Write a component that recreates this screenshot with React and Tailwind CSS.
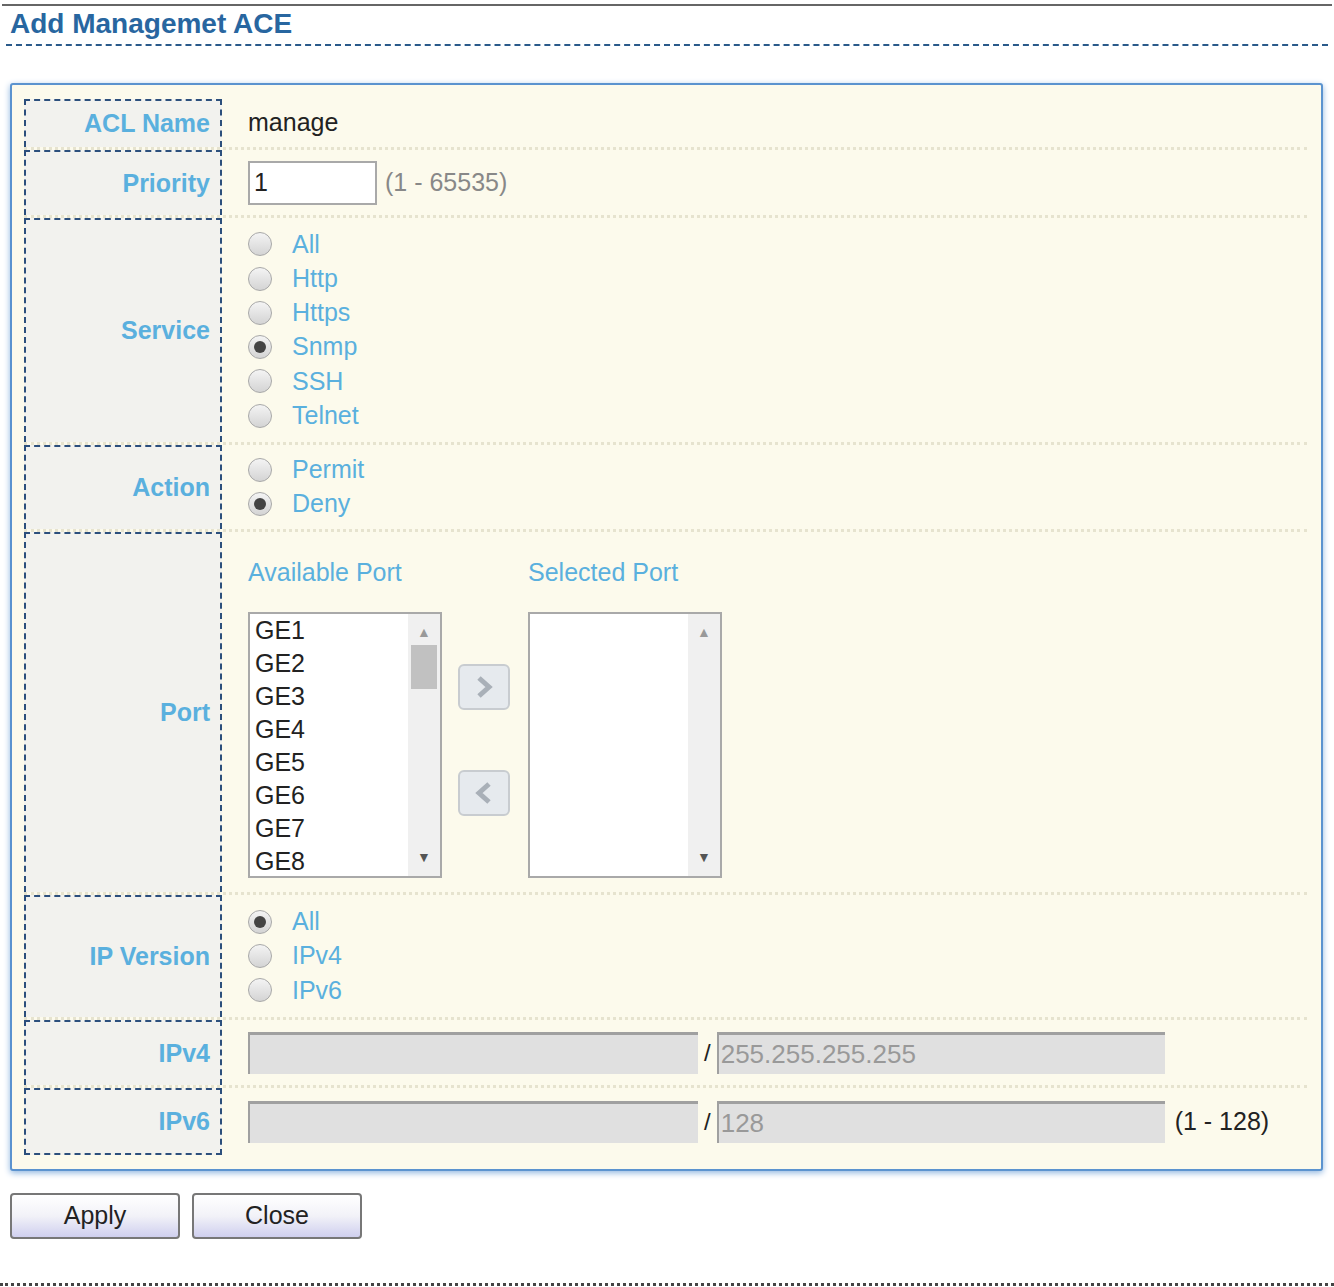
const font = { fontFamily: '"Liberation Sans", Arial, sans-serif' };

function Radio({ checked, label }) {
  return (
    <div className="flex items-center h-[34.3px] gap-[20px]">
      <span className="w-[24px] h-[24px] rounded-full border border-[#a8a8a8] bg-gradient-to-b from-[#f4f4f4] to-[#d4d4d4] flex items-center justify-center">
        {checked && <span className="w-[12px] h-[12px] rounded-full bg-[#444]" />}
      </span>
      <span className="text-[25px] text-[#5ab0de]">{label}</span>
    </div>
  );
}

function Row({ label, h, children, last }) {
  return (
    <div className={`flex ${last ? '' : 'border-b-[3px] border-dotted border-[#e6e3cf]'}`} style={{ height: h }}>
      <div className={`w-[198px] shrink-0 bg-[#f2f2ee] border-x-2 border-t-2 border-dashed border-[#2c4f7c] ${last ? 'border-b-2' : ''} flex items-center justify-end pr-[10px]`}>
        <span className="text-[25px] font-bold text-[#5ab0de]">{label}</span>
      </div>
      <div className="flex-1 pl-[26px] flex flex-col justify-center">{children}</div>
    </div>
  );
}

function ListBox({ items }) {
  return (
    <div className="w-[194px] h-[266px] border-2 border-[#a9a9a9] bg-white flex">
      <div className="flex-1 pl-[5px] text-[25px] text-[#222] leading-[33px] overflow-hidden">
        {items.map((i) => <div key={i}>{i}</div>)}
      </div>
      <div className="w-[32px] bg-[#f0f0f0] flex flex-col items-center py-[8px]">
        <span className="text-[14px] text-[#999]">▲</span>
        {items.length > 0 && <div className="w-[26px] h-[44px] bg-[#c1c1c1] mt-[2px]" />}
        <span className="text-[14px] text-[#555] mt-auto">▼</span>
      </div>
    </div>
  );
}

function Arrow({ dir }) {
  return (
    <div className="w-[52px] h-[46px] rounded-[6px] border-2 border-[#c8ccd0] bg-[#e6eaee] flex items-center justify-center">
      <svg width="22" height="26" viewBox="0 0 22 26">
        <path d={dir === 'r' ? 'M6 4 L16 13 L6 22' : 'M16 4 L6 13 L16 22'} stroke="#a9b0b8" strokeWidth="5" fill="none" />
      </svg>
    </div>
  );
}

function GrayInput({ w, text }) {
  return (
    <div className={`${w} h-[42px] bg-[#e0e0e0] border-t-[3px] border-l-2 border-[#a0a0a0] flex items-center px-[2px] text-[26px] text-[#999]`}>
      {text}
    </div>
  );
}

export default function App() {
  return (
    <div style={font} className="w-[1334px] h-[1287px] bg-white relative">
      <div className="border-t-2 border-[#666] mx-[2px] mt-[4px]" />
      <div className="px-[10px] text-[28px] font-bold text-[#2866a0] leading-[36px]">Add Managemet ACE</div>
      <div className="border-t-2 border-dashed border-[#2a5a8a] mx-[6px] mt-[2px]" />
      <div className="mx-[10px] mt-[37px] w-[1313px] border-2 border-[#5b93cf] rounded-[3px] shadow-[0_2px_6px_#8fb6e0] bg-[#fcfaec] pl-[12px] pr-[14px] pt-[14px] pb-[14px]">
        <Row label="ACL Name" h={51}>
          <span className="text-[25px] text-[#222]">manage</span>
        </Row>
        <Row label="Priority" h={68}>
          <div className="flex items-center gap-[8px]">
            <div className="w-[129px] h-[44px] border-2 border-[#a9a9a9] bg-white text-[25px] text-[#222] flex items-center px-[4px]">1</div>
            <span className="text-[25px] text-[#888]">(1 - 65535)</span>
          </div>
        </Row>
        <Row label="Service" h={227}>
          <Radio label="All" />
          <Radio label="Http" />
          <Radio label="Https" />
          <Radio checked label="Snmp" />
          <Radio label="SSH" />
          <Radio label="Telnet" />
        </Row>
        <Row label="Action" h={87}>
          <Radio label="Permit" />
          <Radio checked label="Deny" />
        </Row>
        <Row label="Port" h={363}>
          <div className="flex gap-[86px] pt-[8px]">
            <div className="flex flex-col gap-[20px]">
              <span className="text-[25px] text-[#5ab0de]">Available Port</span>
              <div className="flex gap-[16px]">
                <ListBox items={['GE1', 'GE2', 'GE3', 'GE4', 'GE5', 'GE6', 'GE7', 'GE8']} />
                <div className="flex flex-col gap-[60px] pt-[52px]">
                  <Arrow dir="r" />
                  <Arrow dir="l" />
                </div>
              </div>
            </div>
            <div className="flex flex-col gap-[20px] -ml-[68px]">
              <span className="text-[25px] text-[#5ab0de]">Selected Port</span>
              <ListBox items={[]} />
            </div>
          </div>
        </Row>
        <Row label="IP Version" h={125}>
          <Radio checked label="All" />
          <Radio label="IPv4" />
          <Radio label="IPv6" />
        </Row>
        <Row label="IPv4" h={68}>
          <div className="flex items-center gap-[6px]">
            <GrayInput w="w-[450px]" />
            <span className="text-[24px] text-[#222]">/</span>
            <GrayInput w="w-[448px]" text="255.255.255.255" />
          </div>
        </Row>
        <Row label="IPv6" h={67} last>
          <div className="flex items-center gap-[6px]">
            <GrayInput w="w-[450px]" />
            <span className="text-[24px] text-[#222]">/</span>
            <GrayInput w="w-[448px]" text="128" />
            <span className="text-[25px] text-[#222] ml-[4px]">(1 - 128)</span>
          </div>
        </Row>
      </div>
      <div className="flex gap-[12px] ml-[10px] mt-[22px]">
        {['Apply', 'Close'].map((b) => (
          <div key={b} className="w-[170px] h-[46px] rounded-[4px] border-2 border-[#777] bg-gradient-to-b from-white via-[#f2f2f8] to-[#cfcfee] flex items-center justify-center text-[25px] text-[#222]">{b}</div>
        ))}
      </div>
      <div className="absolute left-0 right-0 top-[1279px] border-t-[3px] border-dotted border-[#444]" />
    </div>
  );
}
